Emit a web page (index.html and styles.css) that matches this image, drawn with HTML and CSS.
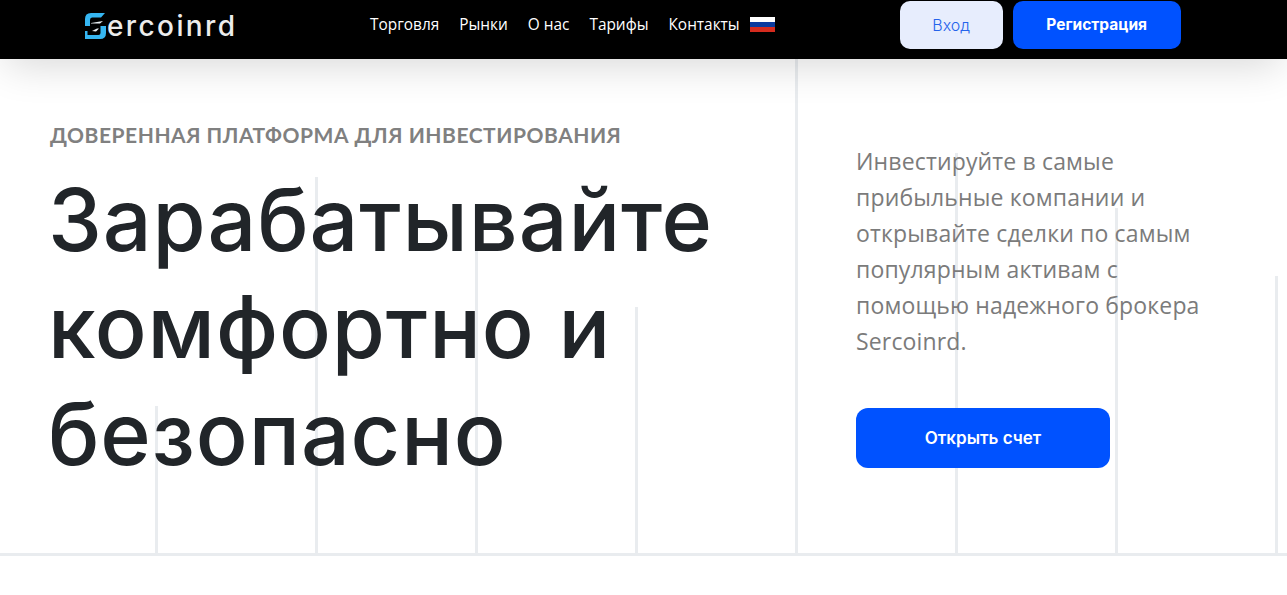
FILE: index.html
```html
<!DOCTYPE html>
<html lang="ru">
<head>
<meta charset="utf-8">
<title>Sercoinrd</title>
<link rel="stylesheet" href="styles.css">
</head>
<body>
<header class="topbar">
  <a class="logo" href="#">
    <svg class="logo-mark" width="21" height="26" viewBox="0 0 21 26" aria-hidden="true">
      <path d="M20 0 L16 4.500 H7 Q5 4.500 5 7 V13 H0 V6 Q0 0 6 0 Z" fill="#35b6f2"/>
      <path d="M15.500 13 H21 V20 Q21 26 15 26 H0 V18 H2.500 V22 H13.500 Q15.500 22 15.500 20 Z" fill="#35b6f2"/>
      <path d="M6 10 L18 8 L15 10.500 H6 Z M7 18 L12 15.500 H14 L11 18.500 Z" fill="#e8eef2"/>
    </svg>
    <span class="logo-text">ercoinrd</span>
  </a>
  <nav class="nav">
    <a href="#">Торговля</a>
    <a href="#">Рынки</a>
    <a href="#">О нас</a>
    <a href="#">Тарифы</a>
    <a href="#">Контакты</a>
    <span class="flag" aria-label="RU"><i class="w"></i><i class="b"></i><i class="r"></i></span>
  </nav>
  <div class="auth">
    <a class="btn btn-login" href="#">Вход</a>
    <a class="btn btn-reg" href="#">Регистрация</a>
  </div>
</header>
<main class="hero">
  <div class="rules" aria-hidden="true">
    <span class="rule r1"></span><span class="rule r2"></span><span class="rule r3"></span><span class="rule r4"></span>
    <span class="rule r5"></span><span class="rule r6"></span><span class="rule r7"></span><span class="rule r8"></span>
  </div>
  <section class="hero-left">
    <p class="eyebrow">Доверенная платформа для инвестирования</p>
    <h1 class="title">Зарабатывайте комфортно и безопасно</h1>
  </section>
  <section class="hero-right">
    <p class="lead">Инвестируйте в самые прибыльные компании и открывайте сделки по самым популярным активам с помощью надежного брокера Sercoinrd.</p>
    <a class="btn btn-open" href="#">Открыть счет</a>
  </section>
</main>
</body>
</html>
```
FILE: styles.css
```css
* { box-sizing: border-box; }
html, body { margin: 0; height: 100%; background: #fff; overflow: hidden; }
body { font-family: "Inter", "Liberation Sans", sans-serif; color: #212529; }
a { text-decoration: none; color: inherit; }
p, h1 { margin: 0; }

.topbar {
  position: relative;
  z-index: 2;
  height: 59px;
  background: #000;
  display: flex;
  align-items: flex-start;
  padding-left: 85px;
  box-shadow: 0 12px 40px -6px rgba(0, 0, 0, .16);
}
.logo { display: flex; align-items: center; margin-top: 13px; width: 285px; }
.logo-mark { display: block; flex: none; }
.logo-text { margin-left: 1px; color: #ececec; font: 500 28px/26px "Inter", sans-serif; letter-spacing: 2.4px; }

.nav { display: flex; align-items: center; gap: 20px; height: 49px; color: #fff; font: 400 15.400px/20px "Open Sans", sans-serif; }
.flag { display: flex; flex-direction: column; width: 25px; height: 15px; margin-left: -10px; }
.flag i { flex: 1; }
.flag .w { background: #fff; }
.flag .b { background: #0a3a9e; }
.flag .r { background: #d52b1e; }

.auth { display: flex; gap: 10px; margin-left: 125px; padding-top: 1px; }
.btn { display: flex; align-items: center; justify-content: center; font-family: "Inter", sans-serif; }
.btn-login { width: 103px; height: 48px; padding-bottom: 1px; border-radius: 10px; background: #e7edfd; color: #2563eb; font-size: 16px; font-weight: 300; }
.btn-reg { width: 168px; height: 48px; padding-bottom: 1px; border-radius: 10px; background: #0052ff; color: #fff; font-size: 15.500px; font-weight: 700; }

.hero {
  position: relative;
  height: 497px;
  border-bottom: 3px solid #e9ecef;
  display: flex;
}
.rules {
  position: absolute;
  left: -2px;
  top: 0;
  bottom: 0;
  display: grid;
  grid-template-columns: repeat(8, 160px);
}
.rule { border-right: 3px solid #e9ecef; }
.r1 { margin-top: 347px; }
.r2 { margin-top: 118px; }
.r3 { margin-top: 191px; }
.r4 { margin-top: 248px; }
.r5 { margin-top: 0; }
.r6 { margin-top: 94px; }
.r7 { margin-top: 149px; }
.r8 { margin-top: 217px; }

.hero-left { position: relative; width: 856px; padding: 64px 0 0 50px; }
.eyebrow { color: #808080; font: 700 21px/24px "Lato", "Open Sans", sans-serif; letter-spacing: .53px; text-transform: uppercase; }
.title { margin: 20px 0 0 -2px; width: 720px; font: 500 86px/107px "Inter", sans-serif; color: #212529; letter-spacing: .9px; }

.hero-right { position: relative; width: 360px; padding-top: 84px; }
.lead { color: #7b7b7b; font: 400 23px/36px "Open Sans", sans-serif; letter-spacing: .15px; }
.btn-open { width: 254px; height: 60px; margin-top: 49px; border-radius: 12px; background: #0052ff; color: #fff; font-size: 17px; font-weight: 600; }
```
